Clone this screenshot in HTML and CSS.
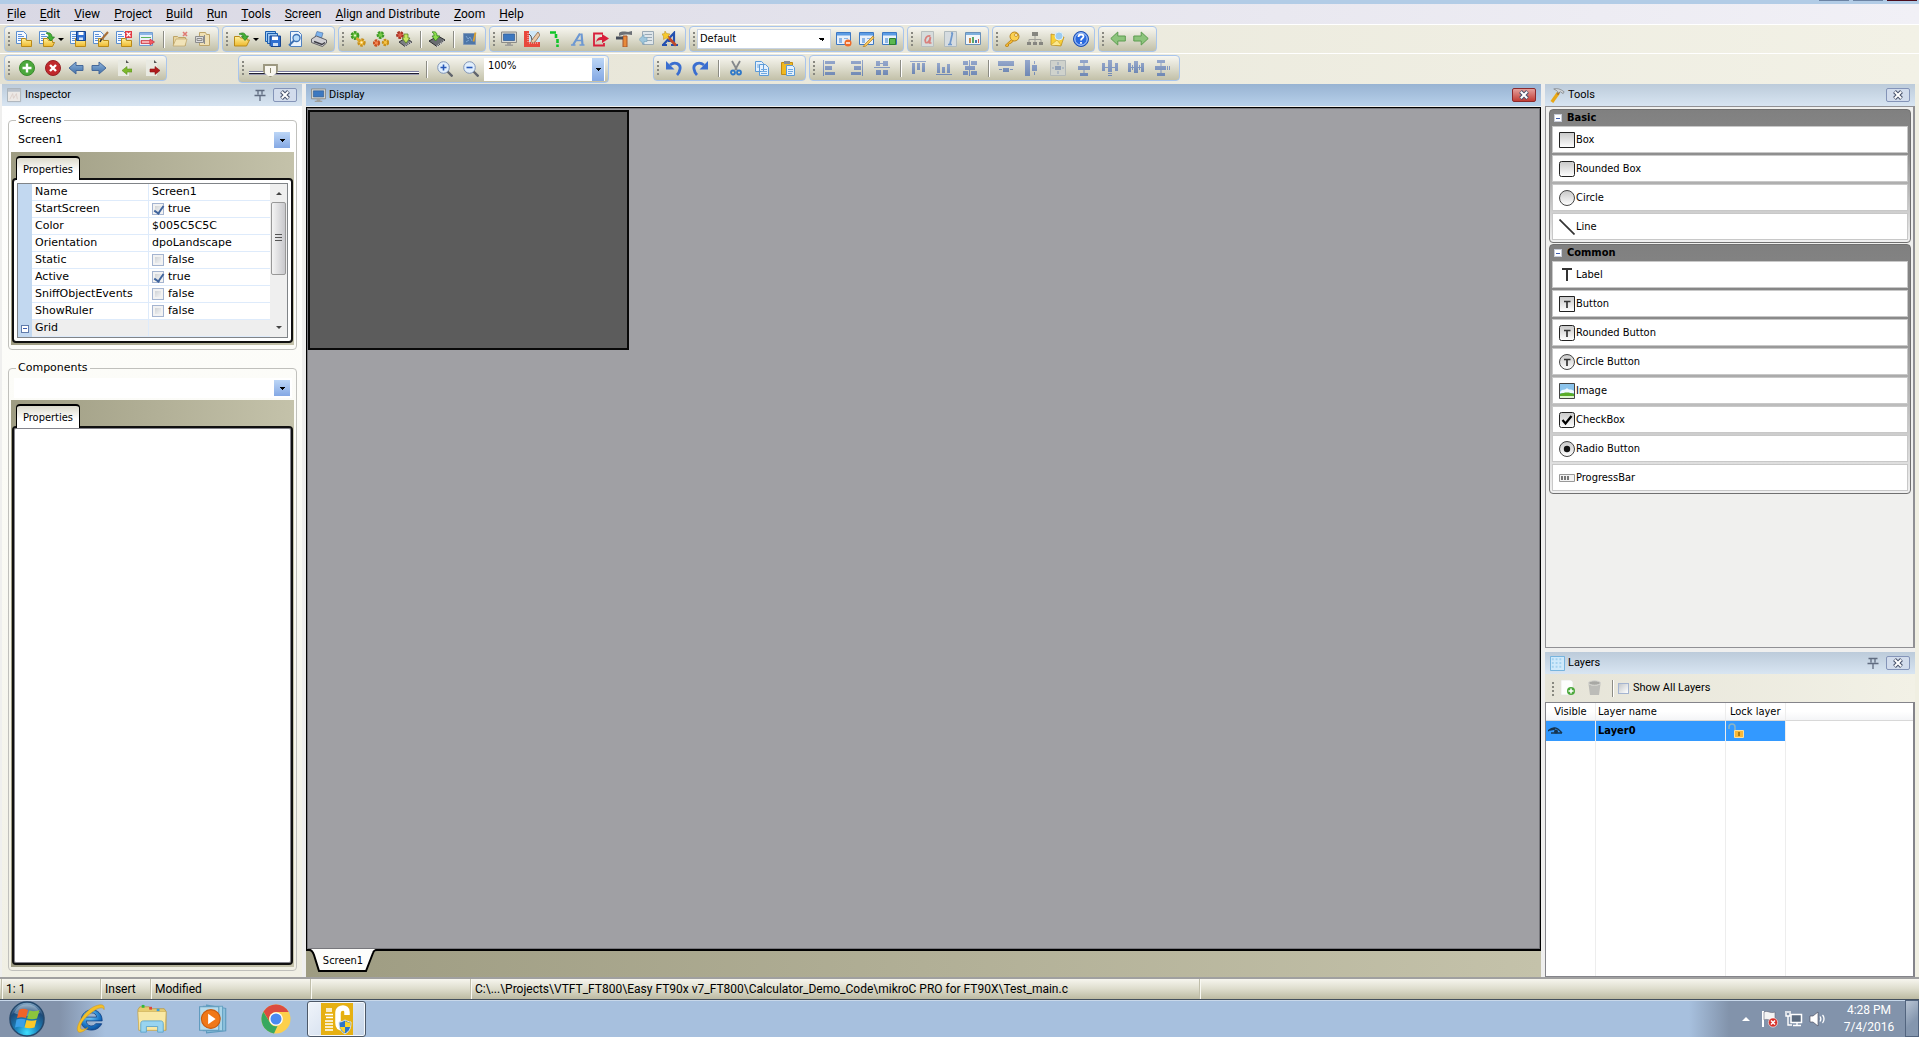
FILE: index.html
```html
<!DOCTYPE html>
<html lang="en">
<head>
<meta charset="utf-8">
<title>Visual TFT</title>
<link rel="stylesheet" href="styles.css">
</head>
<body>
<svg class="sprite" aria-hidden="true">
  <defs>
    <linearGradient id="g-folder" x1="0" y1="0" x2="0" y2="1"><stop offset="0" stop-color="#fff3a0"/><stop offset="1" stop-color="#eeb82c"/></linearGradient>
    <linearGradient id="g-arrow" x1="0" y1="0" x2="0" y2="1"><stop offset="0" stop-color="#8fb4dc"/><stop offset="1" stop-color="#3f6fa8"/></linearGradient>
    <linearGradient id="g-gray" x1="0" y1="0" x2="0" y2="1"><stop offset="0" stop-color="#c8c8c8"/><stop offset="1" stop-color="#ffffff"/></linearGradient>
    <linearGradient id="g-slate" x1="0" y1="0" x2="0" y2="1"><stop offset="0" stop-color="#96a8cc"/><stop offset="1" stop-color="#6f88b4"/></linearGradient>
    <radialGradient id="g-orb" cx=".5" cy=".9" r=".9"><stop offset="0" stop-color="#3fe0ff"/><stop offset=".35" stop-color="#1c86c0"/><stop offset=".75" stop-color="#1d4a78"/><stop offset="1" stop-color="#8fb4d0"/></radialGradient>
    <radialGradient id="g-ie" cx=".4" cy=".3" r=".8"><stop offset="0" stop-color="#7fd4ff"/><stop offset=".6" stop-color="#1c78c8"/><stop offset="1" stop-color="#0a3e86"/></radialGradient>
  </defs>
  <symbol id="i-doc" viewBox="0 0 16 16"><path d="M.5.5h7l3 3v9H.5z" fill="#f4f9ff" stroke="#5a8fd0"/><path d="M2 3.500h4M2 5.500h6M2 7.500h4M2 9.500h3" stroke="#5b8fd8"/></symbol>
  <symbol id="i-folder" viewBox="0 0 16 16"><path d="M5.500 15.500v-8h4l1 2h5v6z" fill="url(#g-folder)" stroke="#b98a18"/></symbol>
  <symbol id="i-new" viewBox="0 0 16 16"><use href="#i-doc"/><use href="#i-folder"/></symbol>
  <symbol id="i-open" viewBox="0 0 16 16"><use href="#i-doc"/><path d="M4.500 15.500v-8h4l1 2h4v2h2l-2 4z" fill="url(#g-folder)" stroke="#b98a18"/><path d="M7 2c4-1 6 1 6 4h2.500L12 10 8 6h2c0-2-1-3-3-4z" fill="#45b035" stroke="#1f7a1c" stroke-width=".7"/></symbol>
  <symbol id="i-save" viewBox="0 0 16 16"><use href="#i-doc"/><use href="#i-folder"/><path d="M6.500.5h9v9h-9z" fill="#2f6fd0" stroke="#17458e"/><path d="M8.500 1h5v3h-5z" fill="#fff"/><path d="M9 6.500h4V9H9z" fill="#cfe0f6"/></symbol>
  <symbol id="i-edit" viewBox="0 0 16 16"><use href="#i-doc"/><use href="#i-folder"/><path d="M15 1 8 9" stroke="#a8713a" stroke-width="2"/><path d="M8.500 8 7 11" stroke="#333" stroke-width="1.500"/></symbol>
  <symbol id="i-close-prj" viewBox="0 0 16 16"><use href="#i-doc"/><use href="#i-folder"/><path d="M9 0h7v7H9z" fill="#e23a44"/><path d="m10.500 1.500 4 4m0-4-4 4" stroke="#fff" stroke-width="1.300"/></symbol>
  <symbol id="i-exit" viewBox="0 0 16 16"><path d="M.5 1.500h13v13H.5z" fill="#e8f1fb" stroke="#6f9bd0"/><path d="M1 2h12v2H1z" fill="#8db6e6"/><path d="M2 6.500h10" stroke="#5bb35b"/><path d="M2 9.500h9V8l4.500 3L11 14v-1.500H2z" fill="#f25a62" stroke="#c0202c" stroke-width=".6"/><path d="M3 11h7" stroke="#fff"/></symbol>
  <symbol id="i-folder-x" viewBox="0 0 16 16"><path d="M1.500 14.500v-9h4l1 1h7v8z" fill="#e9d6a0" stroke="#bda468"/><path d="M4 8h11l-2 7H1z" fill="#f1e3b8" stroke="#bda468" stroke-width=".7"/><path d="m11 1 4 4m0-4-4 4" stroke="#e07a74" stroke-width="1.600"/></symbol>
  <symbol id="i-folder-g" viewBox="0 0 16 16"><path d="M4.500 1.500h6l1 2h3v11h-10z" fill="#efe0b4" stroke="#bda468"/><path d="M.5 5.500h8v6h-8z" fill="#ddd" stroke="#8c8c8c"/><path d="M2 7.500h5v2H2zM9.500 4v9" fill="none" stroke="#8c8c8c"/></symbol>
  <symbol id="i-open2" viewBox="0 0 16 16"><path d="M.5 15V5.500h5l1 1.500H13v2h2.500l-3 6z" fill="url(#g-folder)" stroke="#b98a18"/><path d="M5 3c4-2 6-1 7 2h2.500L11 9.500 7.500 5.500h2C8.800 4 7.500 3.500 5 3z" fill="#45b035" stroke="#1f7a1c" stroke-width=".7"/></symbol>
  <symbol id="i-saveall" viewBox="0 0 16 16"><path d="M.5.500h10v10H.5z" fill="#9cc8f4" stroke="#1b5faf"/><path d="M2.500 2.500h10v10h-10z" fill="#9cc8f4" stroke="#1b5faf"/><path d="M5 5h10.500v10.500H6L5 14.500z" fill="#2f6fd0" stroke="#17458e"/><path d="M7 5.500h6V9H7z" fill="#fff"/><path d="M8 12h5v3H8z" fill="#cfe0f6"/></symbol>
  <symbol id="i-preview" viewBox="0 0 16 16"><path d="M2.500.5h8l3 3v12h-11z" fill="#eaf3fd" stroke="#4f80c0"/><circle cx="8.500" cy="7" r="3.500" fill="#b9dcfa" stroke="#3b70b4" stroke-width="1.300"/><path d="m6 9.500-5 5" stroke="#3b70b4" stroke-width="2"/></symbol>
  <symbol id="i-print" viewBox="0 0 16 16"><path d="m4 6 2-5.500L12 2l-1.500 5z" fill="#7db4ee" stroke="#5076a8" stroke-width=".7"/><path d="m.5 8 5-3 10 4v3l-4 3.500-11-4z" fill="#cfcfd3" stroke="#55555c" stroke-width=".9"/><path d="m3 10.500 8 3 3-2" stroke="#3c3c44" stroke-width="1.500" fill="none"/></symbol>
  <symbol id="i-gears" viewBox="0 0 16 16"><circle cx="5" cy="4.500" r="3.200" fill="#78cc48" stroke="#3f9a28" stroke-width="2.400" stroke-dasharray="2.500 .9"/><circle cx="5" cy="4.500" r="1" fill="#e8f8d8"/><circle cx="11.500" cy="11.500" r="3" fill="#f8c444" stroke="#c8901c" stroke-width="2.400" stroke-dasharray="2.500 .9"/><circle cx="11.500" cy="11.500" r="1" fill="#fff4cc"/><path d="m6.500 7 3 3" stroke="#d8a82c" stroke-width="2.500"/></symbol>
  <symbol id="i-gears3" viewBox="0 0 16 16"><circle cx="7.500" cy="4" r="2.800" fill="#78cc48" stroke="#3f9a28" stroke-width="2.200" stroke-dasharray="2.500 .9"/><circle cx="3.500" cy="12" r="2.600" fill="#f58450" stroke="#c85020" stroke-width="2.200" stroke-dasharray="2.500 .9"/><circle cx="12.500" cy="11.500" r="2.600" fill="#f8c444" stroke="#c8901c" stroke-width="2.200" stroke-dasharray="2.500 .9"/></symbol>
  <symbol id="i-chip" viewBox="0 0 16 16"><path d="m0 10 9-5 7 4-8 6.500z" fill="#6a6d72" stroke="#2c2d31"/><path d="m8 15.500 8-6" stroke="#d8d8d8" stroke-width="2" stroke-dasharray="1 1"/><path d="M3 1c4-1 5 1 5 4h3l-4.500 5L3 5h2c0-2-.500-3-2-4z" fill="#8cdc4c" stroke="#2b7a1a" stroke-width=".7"/></symbol>
  <symbol id="i-gearchip" viewBox="0 0 16 16"><circle cx="4" cy="4" r="2.800" fill="#e0604c" stroke="#a83424" stroke-width="2.200" stroke-dasharray="2.500 .9"/><path d="m3 11 7-4 6 4-7 4.500z" fill="#7c7f84" stroke="#38393d"/><path d="m9 15.500 7-4.500" stroke="#d8d8d8" stroke-width="1.600" stroke-dasharray="1 1"/><path d="M8 3h4v4h2l-4 5-4-5h2z" fill="#c8e860" stroke="#4b7a1a" stroke-width=".7"/></symbol>
  <symbol id="i-board" viewBox="0 0 16 16"><path d="M1.500 2.500h12v11h-12z" fill="#4d76a8" stroke="#7f98b8"/><path d="m4 5 2 3 2-2 2 4M4 11l3-2" stroke="#7ca4d0" fill="none"/><path d="m13.500 1.500-2 9" stroke="#d9a032" stroke-width="1.800"/></symbol>
  <symbol id="i-monitor" viewBox="0 0 16 16"><path d="M.5 1h15v10.500H.5z" fill="#d9d9d4" stroke="#8b8b86"/><path d="M2.500 3h11v6.500h-11z" fill="#3c78c0" stroke="#2c5890" stroke-width=".7"/><path d="M6 12h4v1.500H6zM4 13.500h8V15H4z" fill="#a0a09c"/></symbol>
  <symbol id="i-ruler" viewBox="0 0 16 16"><path d="M4 0h12v12H4z" fill="#cfe8f8"/><path d="M0 0h5v11h11v5H0z" fill="#e8483c"/><path d="m14 1-7 9 1 2 3-1 5-7z" fill="#e8c8a8" stroke="#8a6848" stroke-width=".8"/><path d="m5 3 2 2 1 4" fill="none" stroke="#555"/><path d="M4 2v9M5 12h10" stroke="#fcd0cc" stroke-dasharray="1 1"/></symbol>
  <symbol id="i-question" viewBox="0 0 16 16"><path d="M3 1.500h6M9 3v4M10.500 8v4M10.500 13.500V16" stroke="#10c428" stroke-width="2.600" fill="none"/></symbol>
  <symbol id="i-a" viewBox="0 0 16 16"><path d="M3 14 10 2.500M11.500 2.500l1 11.500" stroke="#6d98d2" stroke-width="2.200" fill="none"/><path d="M5 9.500h7M1 14h4.500M9.500 14h5" stroke="#6d98d2" stroke-width="1.600"/></symbol>
  <symbol id="i-export" viewBox="0 0 16 16"><path d="M11 12v2.500H1v-12h9" fill="none" stroke="#d81e3a" stroke-width="1.800"/><path d="M3 11c1-4 3-5 6-5V3l7 4.500L9 12V9c-2 0-4 0-6 2z" fill="#d81e3a"/></symbol>
  <symbol id="i-hammer" viewBox="0 0 16 16"><path d="M3 2c2-2 7-1.500 9-1l4-1v4l-4-.5c-3 0-6 0-9 1.500z" fill="#6c7076"/><path d="M7 5h4v11H7z" fill="#e88a3a" stroke="#a8562a"/><path d="M0 5.500h7v3H0z" fill="#444b58"/></symbol>
  <symbol id="i-form-back" viewBox="0 0 16 16"><path d="M3.500.5h11v13h-11z" fill="#dfe6ea" stroke="#9aa9b4"/><path d="M6 3.500h7M8 6.500h5M8 9.500h5" stroke="#9aa9b4"/><path d="m0 8.500 5-5v3h3v4H5v3z" fill="#9fc6dc" stroke="#6f9db8" stroke-width=".6"/></symbol>
  <symbol id="i-wizard" viewBox="0 0 16 16"><path d="M1 14 12 2v12M6 10h6M0 14h5M9 14h7" stroke="#2350b0" stroke-width="2.200" fill="none"/><path d="m5 5 9 9.500" stroke="#c0482a" stroke-width="2.600"/><path d="m3 0 1.500 2.500L8 3 6 5.500 7 8 4 7 1.500 8.500V5.500L0 3l2.500-.5z" fill="#f6c82c" stroke="#b98a18" stroke-width=".5"/></symbol>
  <symbol id="i-win" viewBox="0 0 16 16"><path d="M.5 1.500h14v12H.5z" fill="#e8f0fa" stroke="#3c78c4"/><path d="M1 2h13v2.500H1z" fill="#5c9ce4"/><path d="M3 7h3v5H3zM8 7h4v1H8z" fill="#8db6e6"/></symbol>
  <symbol id="i-win-del" viewBox="0 0 16 16"><use href="#i-win"/><circle cx="12" cy="12" r="3.500" fill="#ee6a28"/><path d="M10 12h4" stroke="#fff" stroke-width="1.400"/></symbol>
  <symbol id="i-win-edit" viewBox="0 0 16 16"><use href="#i-win"/><path d="m14 5-8 8-2 3 3-1 8-8z" fill="#f6c860" stroke="#b9842c" stroke-width=".8"/></symbol>
  <symbol id="i-win-green" viewBox="0 0 16 16"><use href="#i-win"/><path d="M7.500 7.500h6v6h-6z" fill="#5cb850" stroke="#2f8030"/></symbol>
  <symbol id="i-fonta" viewBox="0 0 16 16"><path d="M2.500.5h12v15h-12z" fill="#d6dcdc" stroke="#b8bebe"/><path d="M11.500 5c-4-1-6 3-5 6 1 2 4 0 5-5l-1 6h2" fill="none" stroke="#d8807c" stroke-width="1.700"/></symbol>
  <symbol id="i-fontl" viewBox="0 0 16 16"><path d="M2.500.5h12v15h-12z" fill="#d6dce0" stroke="#b0babe"/><path d="M10.500 2 8 13M9 2h2M6 13.500h4" fill="none" stroke="#6f98cc" stroke-width="1.700"/></symbol>
  <symbol id="i-chart" viewBox="0 0 16 16"><path d="M.5 1.500h15v12H.5z" fill="#f2f5f8" stroke="#6a90b8"/><path d="M1 2h14v2H1z" fill="#7fb0dc"/><path d="M4 7h2v5H4z" fill="#c88848"/><path d="M7 6h2v6H7z" fill="#58a868"/><path d="M10 9h2v3h-2z" fill="#4a78b0"/><path d="M13 8h1v4h-1z" fill="#d05850"/></symbol>
  <symbol id="i-key" viewBox="0 0 16 16"><path d="m7.500 8.500-6.500 6 2 1.500 1.500-1v-2l2-.5 3-2.500" fill="#f4b830" stroke="#b47c14" stroke-width=".8"/><circle cx="10.500" cy="5.500" r="4.500" fill="#fbd050" stroke="#b47c14" stroke-width=".9"/><circle cx="12" cy="4" r="1.500" fill="#fff6d8" stroke="#b47c14" stroke-width=".7"/></symbol>
  <symbol id="i-tree" viewBox="0 0 16 16"><path d="M5 1h6v4H5zM0 11h4v3H0zM6 11h4v3H6zM12 11h4v3h-4z" fill="#868680"/><path d="M8 5v6M2 11V8.500h12V11" fill="none" stroke="#a0a09a"/></symbol>
  <symbol id="i-mail" viewBox="0 0 16 16"><path d="M1 3 14 6l-3 9-10-1z" fill="#f8d038" stroke="#b98a18" stroke-width=".7"/><circle cx="9" cy="5" r="4" fill="#9cccf0" stroke="#dfeef8"/><path d="M1 14 7 9l4 5" fill="#fbe88c" stroke="#c89c28" stroke-width=".6"/></symbol>
  <symbol id="i-help" viewBox="0 0 16 16"><circle cx="8" cy="8" r="7.500" fill="#2a6ae0" stroke="#2050b0"/><circle cx="8" cy="8" r="6.200" fill="none" stroke="#bfd6fa"/><path d="M5.500 6c0-3.500 5-3 5-.5 0 2-2.500 1.500-2.500 4M8 11v1.800" fill="none" stroke="#fff" stroke-width="1.800"/></symbol>
  <symbol id="i-gleft" viewBox="0 0 16 16"><path d="m.8 7.500 7-6.500v4h7.500v5H7.800v4z" fill="#8cc47c" stroke="#5c9c50"/></symbol>
  <symbol id="i-gright" viewBox="0 0 16 16"><path d="M15.200 7.500 8.200 1v4H.8v5h7.400v4z" fill="#8cc47c" stroke="#5c9c50"/></symbol>
  <symbol id="i-add" viewBox="0 0 16 16"><circle cx="8" cy="8" r="7.500" fill="#4ca83c" stroke="#3a8a2c"/><path d="M8 3.500v9M3.500 8h9" stroke="#fff" stroke-width="2.400"/></symbol>
  <symbol id="i-remove" viewBox="0 0 16 16"><circle cx="8" cy="8" r="7.500" fill="#c0282c" stroke="#962024"/><path d="m5 5 6 6m0-6-6 6" stroke="#fff" stroke-width="2.400"/></symbol>
  <symbol id="i-bleft" viewBox="0 0 16 16"><path d="m1 8 7-6v3.500h7v5H8V14z" fill="url(#g-arrow)" stroke="#46699a"/></symbol>
  <symbol id="i-bright" viewBox="0 0 16 16"><path d="M15 8 8 2v3.500H1v5h7V14z" fill="url(#g-arrow)" stroke="#46699a"/></symbol>
  <symbol id="i-import-g" viewBox="0 0 16 16"><path d="M2 0h8l3 3v13H2z" fill="#e9eae2"/><path d="M10 0v3h3z" fill="#555"/><path d="m6 10.500 5-4v2.500h5v3h-5v2.500z" fill="#7cb82c" stroke="#5a9020" stroke-width=".6"/></symbol>
  <symbol id="i-export-r" viewBox="0 0 16 16"><path d="M2 0h8l3 3v13H2z" fill="#e9eae2"/><path d="M10 0v3h3z" fill="#555"/><path d="m16 10.500-5-4v2.500H6v3h5v2.500z" fill="#b01c1c" stroke="#8a1010" stroke-width=".6"/></symbol>
  <symbol id="i-zoomin" viewBox="0 0 16 16"><path d="m10.500 10.500 5 5" stroke="#60646c" stroke-width="2.400"/><circle cx="6.500" cy="6.500" r="5.800" fill="#e2effc" stroke="#8095b8"/><path d="M6.500 3.500v6M3.500 6.500h6" stroke="#2858b8" stroke-width="1.600"/></symbol>
  <symbol id="i-zoomout" viewBox="0 0 16 16"><path d="m10.500 10.500 5 5" stroke="#60646c" stroke-width="2.400"/><circle cx="6.500" cy="6.500" r="5.800" fill="#e2effc" stroke="#8095b8"/><path d="M3.500 6.500h6" stroke="#2858b8" stroke-width="1.600"/></symbol>
  <symbol id="i-undo" viewBox="0 0 16 16"><path d="M4 5c5-4 11-1 10 4-.3 2-1 4-3 6" fill="none" stroke="#3a6ed0" stroke-width="2.800"/><path d="M0 1v8.500h8.500z" fill="#3a6ed0"/></symbol>
  <symbol id="i-redo" viewBox="0 0 16 16"><path d="M12 5C7 1 1 4 2 9c.3 2 1 4 3 6" fill="none" stroke="#3a6ed0" stroke-width="2.800"/><path d="M16 1v8.500H7.500z" fill="#3a6ed0"/></symbol>
  <symbol id="i-cut" viewBox="0 0 16 16"><path d="m4 1 5 9M12 1l-5 9" stroke="#84888c" stroke-width="1.800"/><circle cx="5" cy="12.500" r="2" fill="none" stroke="#2f78c8" stroke-width="1.800"/><circle cx="11" cy="12.500" r="2" fill="none" stroke="#2f78c8" stroke-width="1.800"/></symbol>
  <symbol id="i-copy" viewBox="0 0 16 16"><path d="M1.500 1.500h6l2 2v8h-8zM5.500 4.500h6l3 3v8h-9z" fill="#e4f0fc" stroke="#5b9ad8"/><path d="M7 9.500h6M7 11.500h6M7 13.500h6M3 5h2M3 7h2" stroke="#6fa8e0"/></symbol>
  <symbol id="i-paste" viewBox="0 0 16 16"><path d="M1.500 2.500h11v12h-11z" fill="#f0b820" stroke="#c48c10"/><path d="M4 1h6v3H4z" fill="#8a8e94"/><path d="M6.500 5.500h6l2 2v8h-8z" fill="#e4f0fc" stroke="#5b9ad8"/><path d="M8 9.500h5M8 11.500h5M8 13.500h4" stroke="#6fa8e0"/></symbol>
  <symbol id="i-al" viewBox="0 0 16 16"><path d="M1 0h1v16H1zM3 1h10v3H3zM3 6h7v4H3zM3 12h10v3H3z" fill="url(#g-slate)"/></symbol>
  <symbol id="i-ar" viewBox="0 0 16 16"><path d="M14 0h1v16h-1zM3 1h10v3H3zM6 6h7v4H6zM3 12h10v3H3z" fill="url(#g-slate)"/></symbol>
  <symbol id="i-ac" viewBox="0 0 16 16"><path d="M0 7h16v1H0zM2 1h4v5H2zM9 1h5v5H9zM2 10h5v5H2zM9 10h5v5H9zM6 3h3v1H6z" fill="url(#g-slate)"/></symbol>
  <symbol id="i-at" viewBox="0 0 16 16"><path d="M0 1h16v1H0zM2 3h3v11H2zM7 3h3v7H7zM12 3h3v9h-3z" fill="url(#g-slate)"/></symbol>
  <symbol id="i-ab" viewBox="0 0 16 16"><path d="M0 14h16v1H0zM1 3h3v10H1zM6 7h3v6H6zM11 4h3v9h-3z" fill="url(#g-slate)"/></symbol>
  <symbol id="i-am" viewBox="0 0 16 16"><path d="M7 0h1v16H7zM1 1h5v4H1zM9 1h6v4H9zM3 6h10v4H3zM1 11h5v4H1zM9 11h6v4H9z" fill="url(#g-slate)"/></symbol>
  <symbol id="i-ct" viewBox="0 0 16 16"><path d="M0 1h16v5H0zM5 8h6v4H5zM1 9h3v1H1zM12 9h3v1h-3z" fill="url(#g-slate)"/></symbol>
  <symbol id="i-cl" viewBox="0 0 16 16"><path d="M1 0h5v16H1zM8 5h5v6H8zM10 1h1v3h-1zM10 12h1v3h-1z" fill="url(#g-slate)"/></symbol>
  <symbol id="i-cc" viewBox="0 0 16 16"><path d="M.5.5h15v15H.5z" fill="#cfd2cc" stroke="#b2b8b8"/><path d="M5 6h6v4H5zM7.500 2h1v3h-1zM7.500 11h1v3h-1zM2 7.500h2v1H2zM12 7.500h2v1h-2z" fill="#8fa0b8"/></symbol>
  <symbol id="i-dv" viewBox="0 0 16 16"><path d="M4 0h8v3H4zM2 6h12v4H2zM4 13h8v3H4zM7.500 3h1v10h-1z" fill="url(#g-slate)"/></symbol>
  <symbol id="i-dv2" viewBox="0 0 16 16"><path d="M3 0h8v3H3zM1 6h11v4H1zM3 13h8v3H3zM6.500 3h1v10h-1zM13 6h1v4h-1zM15 6h1v4h-1z" fill="url(#g-slate)"/></symbol>
  <symbol id="i-dh" viewBox="0 0 16 16"><path d="M0 3h3v8H0zM6 0h4v12H6zM13 3h3v8h-3zM3 7h10v1H3zM6 13h4v1H6zM6 15h4v1H6z" fill="url(#g-slate)"/></symbol>
  <symbol id="i-dh2" viewBox="0 0 16 16"><path d="M0 3h3v9H0zM6 1h4v12H6zM13 3h3v9h-3zM3 7h10v1H3zM4 5h1v5H4zM11 5h1v5h-1z" fill="url(#g-slate)"/></symbol>
  <symbol id="i-pin" viewBox="0 0 12 12"><path d="M1.500 1.500h9M4 2v3.500M8 2v3.500M.5 6.500h11M6 7v5" fill="none" stroke="#606c80" stroke-width="1.300"/></symbol>
  <symbol id="i-x" viewBox="0 0 12 10"><path d="m2.500 1.500 7 7m0-7-7 7" stroke="#46506a" stroke-width="4"/><path d="m2.800 1.800 6.400 6.400m0-6.400L2.800 8.200" stroke="#fff" stroke-width="2"/></symbol>
  <symbol id="i-inspect" viewBox="0 0 16 16"><path d="M.5.5h14v14H.5z" fill="#ece9e6" stroke="#a8b0b8"/><path d="M1 1h13v3H1z" fill="#b8c0ca"/><path d="m3 12 3-6 1 5 3-5 1 6" fill="none" stroke="#dccfca"/></symbol>
  <symbol id="i-tools" viewBox="0 0 16 16"><path d="m9 5-7 10" stroke="#e8a818" stroke-width="3.600"/><path d="m10 4-2 3" stroke="#b8680c" stroke-width="2"/><path d="M4 1c4-1 7 0 11 3l-1 2-3-2-3 2C9 4 8 3 4 1z" fill="#d4d8dc" stroke="#74787c" stroke-width=".7"/></symbol>
  <symbol id="i-layers" viewBox="0 0 16 16"><path d="M.5.5h15v15H.5z" fill="#cfe9fb" stroke="#6fb0dc"/><path d="M2 3.500h12M2 7.500h12M2 11.500h12" stroke="#a4d2f0" stroke-width="2" stroke-dasharray="2 2"/></symbol>
  <symbol id="t-box" viewBox="0 0 16 16"><path d="M.5.5h15v15H.5z" fill="url(#g-gray)" stroke="#222"/></symbol>
  <symbol id="t-rbox" viewBox="0 0 16 16"><rect x=".5" y=".5" width="15" height="15" rx="2" fill="url(#g-gray)" stroke="#222"/></symbol>
  <symbol id="t-circle" viewBox="0 0 16 16"><circle cx="8" cy="8" r="7.500" fill="url(#g-gray)" stroke="#444"/></symbol>
  <symbol id="t-line" viewBox="0 0 16 16"><path d="m.5.500 15 15" stroke="#333" stroke-width="1.700"/></symbol>
  <symbol id="t-label" viewBox="0 0 16 16"><path d="M3 2h10M8 2v12" stroke="#333" stroke-width="2"/></symbol>
  <symbol id="t-t" viewBox="0 0 16 16"><path d="M5 5.500h6.500M8 5.500V12" stroke="#333" stroke-width="1.700"/></symbol>
  <symbol id="t-button" viewBox="0 0 16 16"><use href="#t-box"/><use href="#t-t"/></symbol>
  <symbol id="t-rbutton" viewBox="0 0 16 16"><use href="#t-rbox"/><use href="#t-t"/></symbol>
  <symbol id="t-cbutton" viewBox="0 0 16 16"><use href="#t-circle"/><use href="#t-t"/></symbol>
  <symbol id="t-image" viewBox="0 0 16 16"><path d="M.5.5h15v15H.5z" fill="#8cc4ec" stroke="#444"/><path d="M1 9c3-4 5-1 7-4 2 3 4 0 7 3v2H1z" fill="#eef8ff"/><path d="M1 11c5-2 9-2 14 0v2H1z" fill="#58ac28"/><path d="M1 13h14v2H1z" fill="#dff4d0"/></symbol>
  <symbol id="t-check" viewBox="0 0 16 16"><use href="#t-rbox"/><path d="m3.500 8 3 3.500 6-7.500" fill="none" stroke="#000" stroke-width="2.200"/></symbol>
  <symbol id="t-radio" viewBox="0 0 16 16"><use href="#t-circle"/><circle cx="8" cy="8" r="3.200" fill="#111"/></symbol>
  <symbol id="t-progress" viewBox="0 0 16 16"><path d="M.5 4.500h15v7H.5z" fill="#f4f4f4" stroke="#999"/><path d="M2 6h2v4H2zM5 6h2v4H5zM8 6h2v4H8z" fill="#777"/></symbol>
  <symbol id="i-layer-add" viewBox="0 0 16 16"><path d="M1 0h10l2 2v13H1z" fill="#fdfdfd" stroke="#e0e0dc" stroke-width=".6"/><circle cx="11" cy="11" r="4" fill="#4ca83c"/><path d="M11 8.500v5M8.500 11h5" stroke="#fff" stroke-width="1.500"/></symbol>
  <symbol id="i-trash" viewBox="0 0 16 16"><path d="m2.500 4 1.500 11h9l1.500-11c-3 2-9 2-12 0z" fill="#bcbcb8"/><ellipse cx="8.500" cy="3" rx="6" ry="2.200" fill="#a8a8a4" stroke="#d4d4d0"/></symbol>
  <symbol id="i-eye" viewBox="0 0 16 10"><path d="M0 5c5-5 9-4 14 2M3 7h11M2 4l5-1" fill="none" stroke="#16344e" stroke-width="1.300"/><circle cx="8" cy="5.500" r="2" fill="#16344e"/></symbol>
  <symbol id="i-lock" viewBox="0 0 16 16"><path d="M1 6V4c0-4 6-4 6 0v3" fill="none" stroke="#8cb4c4" stroke-width="1.500"/><path d="M6.500 7.500h9v7h-9z" fill="#f8b838" stroke="#fbe0a0"/><path d="M10 9h2v4h-2z" fill="#b07c10"/></symbol>
  <symbol id="k-start" viewBox="0 0 36 36"><circle cx="18" cy="18" r="17" fill="url(#g-orb)" stroke="#24486c" stroke-width="1.500"/><path d="M5 12a14 14 0 0 1 26 0c-8 4-18 4-26 0z" fill="#fff" opacity=".3"/><path d="M10 9c3-2 6-1 9 0l-2 8c-3-1-6-1-9 0z" fill="#f06428"/><path d="M20.500 9.500c3 1 7 1 10-.500l-2.500 8.500c-3 1-7 1-10 0z" fill="#8cc63c"/><path d="M7.500 18.500c3-1 6-1 9 0l-2 8c-3-1-6-1-8.500 0z" fill="#3ca0e8"/><path d="M17.500 19c3 1 7 1 10 0l-2 7.500c-3 1-7 1-10 0z" fill="#fcc828"/></symbol>
  <symbol id="k-ie" viewBox="0 0 32 32"><path d="M29 18H12c0 6 8 7 10 3h6.500c-5 11-23 8-22-4C7.500 3 29 2 29 18zM12 14h11c0-6-10-6-11 0z" fill="url(#g-ie)" stroke="#0c3c80" stroke-width=".8"/><path d="M4 30C-2 27 10 6 22 2c6-2 10-2 9 4-1-3-5-2-9 0C12 12 4 22 6 26c1 2 4 1 8-1-4 4-8 6-10 5z" fill="#f4c028" stroke="#c89018" stroke-width=".5"/></symbol>
  <symbol id="k-explorer" viewBox="0 0 32 32"><path d="M1 6 3 3h10l1 2h15l2 3v20H2z" fill="#e6cc70" stroke="#b89840" stroke-width=".8"/><path d="M5 1h3v3H5z" fill="#30b838"/><path d="M13 3h3v3h-3z" fill="#e04838"/><path d="M21 5h3v3h-3z" fill="#38a0e0"/><path d="M1 8h30l-1 20H2z" fill="#f9e8a4" stroke="#c8a850" stroke-width=".6"/><path d="M4 30v-9c0-2 1-3 3-3h18c2 0 3 1 3 3v9h-6v-6H10v6z" fill="#98d4f0" stroke="#58a0c8" stroke-width=".9"/></symbol>
  <symbol id="k-wmp" viewBox="0 0 30 28"><path d="m8 1 18 3v21l-18 2z" fill="#8cc0dc" stroke="#5c98bc"/><path d="M5 2h18v23H5z" fill="#a8d4e8" stroke="#68a4c4"/><path d="M1.500 2.500h18v22h-18z" fill="#b8dcec" stroke="#5c98bc"/><circle cx="12" cy="14" r="8.800" fill="#f07818" stroke="#c85c10"/><path d="m9.500 9 7 5-7 5z" fill="#fff"/></symbol>
  <symbol id="k-chrome" viewBox="0 0 30 30"><circle cx="15" cy="15" r="14.500" fill="#fcd04c"/><path d="M2.500 7.500A14.500 14.500 0 0 1 27.600 8H15a7 7 0 0 0-6.200 10.300z" fill="#dc4c40"/><path d="M2.400 7.700 8.800 18.300A7 7 0 0 0 16.500 22L13 29.400A14.500 14.500 0 0 1 2.400 7.700z" fill="#38a860"/><circle cx="15" cy="15" r="6.800" fill="#fff"/><circle cx="15" cy="15" r="5.500" fill="#4a8af0"/></symbol>
  <symbol id="k-mikro" viewBox="0 0 32 32"><path d="M0 0h32v32H0z" fill="#e6b012"/><path d="M26 12V9c0-3-2-4-4-4s-5 1-5 5v10c0 4 2 5 5 5" fill="none" stroke="#fff" stroke-width="5.500"/><path d="M4 27h8M4 24h8M4 21h8M4 18h8M5 14.500h7M4 11.500h8M5 8h6M5 6h6" stroke="#fff" stroke-width="1.700"/><path d="M18 19c3 0 4-1 6-2 2 1 4 2 6 2 0 6-1 9-6 12-5-3-6-6-6-12z" fill="#2c74c8" stroke="#dfe8f0"/><path d="M24 18v6h5c0-2 .500-3 .500-4.500-2 0-4-.500-5.500-1.500zM24 24v6c-3-2-4.500-4-5-6z" fill="#fcd428"/></symbol>
  <symbol id="y-flag" viewBox="0 0 18 18"><path d="M2 1v16" stroke="#fff" stroke-width="2"/><path d="M3 2c4-2 6 2 11 0v8c-5 2-7-2-11 0z" fill="#f4f4f4" stroke="#667" stroke-width=".6"/><circle cx="12" cy="12.500" r="4.600" fill="#d83028" stroke="#fff" stroke-width=".6"/><path d="m10 10.500 4 4m0-4-4 4" stroke="#fff" stroke-width="1.500"/></symbol>
  <symbol id="y-net" viewBox="0 0 18 18"><path d="M6 4.500h10.500v8H6z" fill="#5c6c80" stroke="#fff" stroke-width="1.500"/><path d="M8 15.500h8M12 13v2M3 6v9h4M1 1v5h4V1M3 1v2" fill="none" stroke="#fff" stroke-width="1.400"/></symbol>
  <symbol id="y-vol" viewBox="0 0 18 18"><path d="M1 6h3l5-4v14l-5-4H1z" fill="#fff" stroke="#445" stroke-width=".6"/><path d="M11 6.500c1 1.500 1 3.500 0 5M13.500 5c2 2 2 6 0 8" fill="none" stroke="#fff" stroke-width="1.300"/></symbol>
</svg>

<div class="app">
  <div class="caption-strip"><span class="caption-button"></span><span class="caption-button"></span><span class="caption-button caption-close"></span></div>
  <nav class="menu-bar">
    <a href="#file"><u>F</u>ile</a><a href="#edit"><u>E</u>dit</a><a href="#view"><u>V</u>iew</a><a href="#project"><u>P</u>roject</a><a href="#build"><u>B</u>uild</a><a href="#run"><u>R</u>un</a><a href="#tools"><u>T</u>ools</a><a href="#screen"><u>S</u>creen</a><a href="#align"><u>A</u>lign and Distribute</a><a href="#zoom"><u>Z</u>oom</a><a href="#help"><u>H</u>elp</a>
  </nav>

  <div class="toolbar-row">
    <div class="toolbar" role="toolbar" aria-label="Project">
      <button aria-label="New project"><svg><use href="#i-new"/></svg></button>
      <button class="has-menu" aria-label="Open project"><svg><use href="#i-open"/></svg></button>
      <button aria-label="Save project"><svg><use href="#i-save"/></svg></button>
      <button aria-label="Edit project"><svg><use href="#i-edit"/></svg></button>
      <button aria-label="Close project"><svg><use href="#i-close-prj"/></svg></button>
      <button aria-label="Exit"><svg><use href="#i-exit"/></svg></button>
      <span class="separator"></span>
      <button aria-label="Remove folder"><svg><use href="#i-folder-x"/></svg></button>
      <button aria-label="Rename folder"><svg><use href="#i-folder-g"/></svg></button>
    </div>
    <div class="toolbar" role="toolbar" aria-label="File">
      <button class="has-menu" aria-label="Open file"><svg><use href="#i-open2"/></svg></button>
      <button aria-label="Save all"><svg><use href="#i-saveall"/></svg></button>
      <button aria-label="Print preview"><svg><use href="#i-preview"/></svg></button>
      <button aria-label="Print"><svg><use href="#i-print"/></svg></button>
    </div>
    <div class="toolbar" role="toolbar" aria-label="Build">
      <button aria-label="Build"><svg><use href="#i-gears"/></svg></button>
      <button aria-label="Build all"><svg><use href="#i-gears3"/></svg></button>
      <button aria-label="Build and program"><svg><use href="#i-gearchip"/></svg></button>
      <span class="separator"></span>
      <button aria-label="Program"><svg><use href="#i-chip"/></svg></button>
      <span class="separator"></span>
      <button aria-label="Board"><svg><use href="#i-board"/></svg></button>
    </div>
    <div class="toolbar" role="toolbar" aria-label="Tools">
      <button aria-label="Display"><svg><use href="#i-monitor"/></svg></button>
      <button aria-label="Theme"><svg><use href="#i-ruler"/></svg></button>
      <button aria-label="Snake"><svg><use href="#i-question"/></svg></button>
      <button aria-label="Font"><svg><use href="#i-a"/></svg></button>
      <button aria-label="Export"><svg><use href="#i-export"/></svg></button>
      <button aria-label="Options"><svg><use href="#i-hammer"/></svg></button>
      <button aria-label="Restore"><svg><use href="#i-form-back"/></svg></button>
      <button aria-label="Wizard"><svg><use href="#i-wizard"/></svg></button>
    </div>
    <div class="toolbar toolbar-snug" role="toolbar" aria-label="Scheme">
      <span class="picker picker-scheme"><select aria-label="Scheme"><option>Default</option></select></span>
      <button aria-label="Delete scheme"><svg><use href="#i-win-del"/></svg></button>
      <button aria-label="Edit scheme"><svg><use href="#i-win-edit"/></svg></button>
      <button aria-label="Save scheme"><svg><use href="#i-win-green"/></svg></button>
    </div>
    <div class="toolbar" role="toolbar" aria-label="Fonts">
      <button aria-label="Font style"><svg><use href="#i-fonta"/></svg></button>
      <button aria-label="Font line"><svg><use href="#i-fontl"/></svg></button>
      <button aria-label="Statistics"><svg><use href="#i-chart"/></svg></button>
    </div>
    <div class="toolbar toolbar-snug" role="toolbar" aria-label="Help">
      <button aria-label="License"><svg><use href="#i-key"/></svg></button>
      <button aria-label="Structure"><svg><use href="#i-tree"/></svg></button>
      <button aria-label="Support"><svg><use href="#i-mail"/></svg></button>
      <button aria-label="Help"><svg><use href="#i-help"/></svg></button>
    </div>
    <div class="toolbar" role="toolbar" aria-label="History">
      <button aria-label="Back"><svg><use href="#i-gleft"/></svg></button>
      <button aria-label="Forward"><svg><use href="#i-gright"/></svg></button>
    </div>
  </div>

  <div class="toolbar-row toolbar-row-second">
    <div class="toolbar toolbar-screens" role="toolbar" aria-label="Screens">
      <button class="wide" aria-label="Add screen"><svg><use href="#i-add"/></svg></button>
      <button aria-label="Remove screen"><svg><use href="#i-remove"/></svg></button>
      <button aria-label="Previous screen"><svg><use href="#i-bleft"/></svg></button>
      <button aria-label="Next screen"><svg><use href="#i-bright"/></svg></button>
      <button class="wide" aria-label="Import screen"><svg><use href="#i-import-g"/></svg></button>
      <button class="wide" aria-label="Export screen"><svg><use href="#i-export-r"/></svg></button>
    </div>
    <div class="toolbar toolbar-zoom" role="toolbar" aria-label="Zoom">
      <input class="zoom-slider" type="range" min="0" max="100" value="9" aria-label="Zoom level">
      <span class="separator"></span>
      <button class="wide" aria-label="Zoom in"><svg><use href="#i-zoomin"/></svg></button>
      <button aria-label="Zoom out"><svg><use href="#i-zoomout"/></svg></button>
      <span class="picker picker-zoom"><select aria-label="Zoom"><option>100%</option></select></span>
    </div>
    <div class="toolbar toolbar-edit" role="toolbar" aria-label="Edit">
      <button aria-label="Undo"><svg><use href="#i-undo"/></svg></button>
      <button aria-label="Redo"><svg><use href="#i-redo"/></svg></button>
      <span class="separator"></span>
      <button aria-label="Cut"><svg><use href="#i-cut"/></svg></button>
      <button aria-label="Copy"><svg><use href="#i-copy"/></svg></button>
      <button aria-label="Paste"><svg><use href="#i-paste"/></svg></button>
    </div>
    <div class="toolbar toolbar-align" role="toolbar" aria-label="Align">
      <button aria-label="Align left"><svg><use href="#i-al"/></svg></button>
      <button aria-label="Align right"><svg><use href="#i-ar"/></svg></button>
      <button aria-label="Align centers"><svg><use href="#i-ac"/></svg></button>
      <span class="separator"></span>
      <button aria-label="Align top"><svg><use href="#i-at"/></svg></button>
      <button aria-label="Align bottom"><svg><use href="#i-ab"/></svg></button>
      <button aria-label="Align middles"><svg><use href="#i-am"/></svg></button>
      <span class="separator"></span>
      <button aria-label="Center horizontally"><svg><use href="#i-ct"/></svg></button>
      <button aria-label="Center vertically"><svg><use href="#i-cl"/></svg></button>
      <button aria-label="Center in screen"><svg><use href="#i-cc"/></svg></button>
      <button aria-label="Distribute vertically"><svg><use href="#i-dv"/></svg></button>
      <button aria-label="Distribute horizontally"><svg><use href="#i-dh"/></svg></button>
      <button aria-label="Space horizontally"><svg><use href="#i-dh2"/></svg></button>
      <button aria-label="Space vertically"><svg><use href="#i-dv2"/></svg></button>
    </div>
  </div>

  <main class="workspace">
    <aside class="inspector">
      <header class="dock-title"><svg class="dock-icon"><use href="#i-inspect"/></svg><h2>Inspector</h2><button class="pin" aria-label="Pin"><svg><use href="#i-pin"/></svg></button><button class="close" aria-label="Close"><svg><use href="#i-x"/></svg></button></header>
      <div class="inspector-body">
        <fieldset class="screens-box">
          <legend>Screens</legend>
          <span class="picker picker-wide"><select aria-label="Screen"><option>Screen1</option></select></span>
          <div class="tab-area">
            <button class="tab">Properties</button>
            <div class="tab-page">
              <div class="property-frame">
                <table class="properties">
                  <tr><td class="gutter"></td><th>Name</th><td>Screen1</td></tr>
                  <tr><td class="gutter"></td><th>StartScreen</th><td><label><input type="checkbox" checked>true</label></td></tr>
                  <tr><td class="gutter"></td><th>Color</th><td>$005C5C5C</td></tr>
                  <tr><td class="gutter"></td><th>Orientation</th><td>dpoLandscape</td></tr>
                  <tr><td class="gutter"></td><th>Static</th><td><label><input type="checkbox">false</label></td></tr>
                  <tr><td class="gutter"></td><th>Active</th><td><label><input type="checkbox" checked>true</label></td></tr>
                  <tr><td class="gutter"></td><th>SniffObjectEvents</th><td><label><input type="checkbox">false</label></td></tr>
                  <tr><td class="gutter"></td><th>ShowRuler</th><td><label><input type="checkbox">false</label></td></tr>
                  <tr class="category"><td class="gutter"><span class="fold"></span></td><th>Grid</th><td></td></tr>
                </table>
                <div class="scrollbar"><span class="scroll-up"></span><span class="scroll-thumb"></span><span class="scroll-down"></span></div>
              </div>
            </div>
          </div>
        </fieldset>
        <fieldset class="components-box">
          <legend>Components</legend>
          <span class="picker picker-wide"><select aria-label="Component"><option></option></select></span>
          <div class="tab-area">
            <button class="tab">Properties</button>
            <div class="tab-page tab-page-empty"></div>
          </div>
        </fieldset>
      </div>
    </aside>

    <section class="display">
      <header class="dock-title dock-title-active"><svg class="dock-icon"><use href="#i-monitor"/></svg><h2>Display</h2><button class="close close-active" aria-label="Close"><svg><use href="#i-x"/></svg></button></header>
      <div class="canvas"><div class="device-screen"></div></div>
      <div class="screen-tabs">
        <button class="screen-tab"><svg class="screen-tab-shape" viewBox="0 0 68 24" preserveAspectRatio="none"><path d="M0 0c3 0 4 2 5 5l5 17h47l7-18c1-3 2-4 4-4z" fill="#fdfdfb"/><path d="M0 1c3 0 4 2 5 5l5 16h47l7-18c1-3 2-3 4-3" fill="none" stroke="#000" stroke-width="2"/></svg><span>Screen1</span></button>
      </div>
    </section>

    <aside class="right-dock">
      <section class="tools-panel">
        <header class="dock-title"><svg class="dock-icon"><use href="#i-tools"/></svg><h2>Tools</h2><button class="close" aria-label="Close"><svg><use href="#i-x"/></svg></button></header>
        <div class="tools-body">
          <section class="tool-group">
            <h3><span class="fold"></span>Basic</h3>
            <button><svg><use href="#t-box"/></svg>Box</button>
            <button><svg><use href="#t-rbox"/></svg>Rounded Box</button>
            <button><svg><use href="#t-circle"/></svg>Circle</button>
            <button><svg><use href="#t-line"/></svg>Line</button>
          </section>
          <section class="tool-group">
            <h3><span class="fold"></span>Common</h3>
            <button><svg><use href="#t-label"/></svg>Label</button>
            <button><svg><use href="#t-button"/></svg>Button</button>
            <button><svg><use href="#t-rbutton"/></svg>Rounded Button</button>
            <button><svg><use href="#t-cbutton"/></svg>Circle Button</button>
            <button><svg><use href="#t-image"/></svg>Image</button>
            <button><svg><use href="#t-check"/></svg>CheckBox</button>
            <button><svg><use href="#t-radio"/></svg>Radio Button</button>
            <button><svg><use href="#t-progress"/></svg>ProgressBar</button>
          </section>
        </div>
      </section>
      <section class="layers-panel">
        <header class="dock-title"><svg class="dock-icon"><use href="#i-layers"/></svg><h2>Layers</h2><button class="pin" aria-label="Pin"><svg><use href="#i-pin"/></svg></button><button class="close" aria-label="Close"><svg><use href="#i-x"/></svg></button></header>
        <div class="layers-toolbar">
          <button aria-label="Add layer"><svg><use href="#i-layer-add"/></svg></button>
          <button aria-label="Delete layer"><svg><use href="#i-trash"/></svg></button>
          <span class="separator"></span>
          <label><input type="checkbox">Show All Layers</label>
        </div>
        <div class="layers-body">
          <table class="layers">
            <thead><tr><th class="col-visible">Visible</th><th class="col-name">Layer name</th><th class="col-lock">Lock layer</th><th></th></tr></thead>
            <tbody>
              <tr class="selected"><td><svg class="eye"><use href="#i-eye"/></svg></td><td>Layer0</td><td><svg class="lock"><use href="#i-lock"/></svg></td><td></td></tr>
              <tr class="filler"><td></td><td></td><td></td><td></td></tr>
            </tbody>
          </table>
        </div>
      </section>
    </aside>
  </main>

  <footer class="status-bar">
    <span class="status-position">1: 1</span><span class="status-mode">Insert</span><span class="status-state">Modified</span><span class="status-blank"></span><span class="status-path">C:\...\Projects\VTFT_FT800\Easy FT90x v7_FT800\Calculator_Demo_Code\mikroC PRO for FT90X\Test_main.c</span><span class="status-rest"></span>
  </footer>

  <div class="taskbar">
    <button class="task-start" aria-label="Start"><svg><use href="#k-start"/></svg></button>
    <button class="task" aria-label="Internet Explorer"><svg><use href="#k-ie"/></svg></button>
    <button class="task" aria-label="Explorer"><svg><use href="#k-explorer"/></svg></button>
    <button class="task" aria-label="Media Player"><svg><use href="#k-wmp"/></svg></button>
    <button class="task" aria-label="Chrome"><svg><use href="#k-chrome"/></svg></button>
    <button class="task task-active" aria-label="mikroC"><svg><use href="#k-mikro"/></svg></button>
    <div class="tray">
      <button class="tray-more" aria-label="Show hidden icons"></button>
      <svg><use href="#y-flag"/></svg><svg><use href="#y-net"/></svg><svg><use href="#y-vol"/></svg>
      <div class="clock"><span>4:28 PM</span><span>7/4/2016</span></div>
    </div>
    <button class="show-desktop" aria-label="Show desktop"></button>
  </div>
</div>
</body>
</html>
```
FILE: styles.css
```css
* { box-sizing: border-box; }

:root {
  --ui: Roboto, "Noto Sans", sans-serif;
  --tahoma: "DejaVu Sans Condensed", "DejaVu Sans", sans-serif;
  --verdana: "DejaVu Sans", sans-serif;
}

body {
  margin: 0;
  font: 11px/16px var(--ui);
  color: #000;
  background: #f0f0e4;
}

button, input, select, fieldset, legend {
  margin: 0;
  padding: 0;
  border: 0;
  font: inherit;
  color: inherit;
}

button { background: none; }
h2, h3 { margin: 0; font-size: 11px; }
.sprite { position: absolute; width: 0; height: 0; }

.app {
  display: flex;
  flex-direction: column;
  height: 100vh;
  overflow: hidden;
}

/* Window caption and menu */
.caption-strip {
  display: flex;
  justify-content: flex-end;
  gap: 4px;
  height: 4px;
  flex: none;
  padding-right: 2px;
  background: #b2cce6;
}
.caption-button { width: 30px; height: 1px; background: #6c84a4; }
.caption-close { background: #4c0c1c; }

.menu-bar {
  display: flex;
  flex: none;
  align-items: center;
  gap: 14px;
  height: 20px;
  padding-left: 7px;
  font-size: 12px;
  background: linear-gradient(to right, #d9d8e4, #f1f0f6);
}
.menu-bar a { color: inherit; text-decoration: none; }
.menu-bar u { text-underline-offset: 2px; }

/* Toolbars */
.toolbar-row {
  display: flex;
  flex: none;
  gap: 3px;
  height: 29px;
  padding: 1px 4px 1px;
  border-top: 1px solid #fff;
  background: linear-gradient(to right, #e4e2d4, #f2f1e6);
}
.toolbar-row-second { height: 31px; }

.toolbar {
  display: flex;
  flex: none;
  align-items: center;
  height: 26px;
  padding: 0 4px 0 7px;
  border: 1px solid #a9c5ec;
  border-radius: 4px;
  background:
    linear-gradient(to bottom, #888880 50%, transparent 50%) 3px 5px / 2px 4px no-repeat,
    linear-gradient(to bottom, #888880 50%, transparent 50%) 3px 9px / 2px 4px no-repeat,
    linear-gradient(to bottom, #888880 50%, transparent 50%) 3px 13px / 2px 4px no-repeat,
    linear-gradient(to bottom, #888880 50%, transparent 50%) 3px 17px / 2px 4px no-repeat,
    linear-gradient(to bottom, #f7f6f0, #dddccd 50%, #c2c0a8);
}
.toolbar-snug { padding-right: 2px; }
.toolbar button {
  display: flex;
  align-items: center;
  justify-content: center;
  width: 23px;
  height: 22px;
}
.toolbar button.has-menu {
  justify-content: flex-start;
  width: 31px;
  padding-left: 4px;
}
.has-menu::after {
  content: "";
  margin-left: 3px;
  border: 3px solid transparent;
  border-top: 3px solid #000;
  border-bottom: 0;
}
.toolbar svg { width: 16px; height: 16px; }
.separator {
  width: 2px;
  height: 17px;
  margin: 0 3px 0 5px;
  background: linear-gradient(to right, #8c8c84 50%, #fff 50%);
}
.toolbar-screens button.wide, .toolbar-zoom button.wide { width: 28px; }
.toolbar-screens { padding: 0 0 0 8px; }
.toolbar-zoom { height: 28px; margin-left: 68px; padding: 0 3px 0 10px; }
.toolbar-edit { margin-left: 41px; }
.toolbar-edit button, .toolbar-align button { width: 26px; }

.picker {
  position: relative;
  display: block;
  background: #fff;
}
.picker select {
  width: 100%;
  height: 100%;
  appearance: none;
  background: none;
  outline: 0;
}
.picker::after {
  content: "";
  position: absolute;
  top: 0;
  right: 0;
  bottom: 0;
  width: 16px;
  pointer-events: none;
  background:
    conic-gradient(from 135deg at 50% 100%, transparent 0) 0 0 / 0 0 no-repeat,
    conic-gradient(from 315deg at 50% 100%, #000 90deg, transparent 0) 50% 50% / 6px 3px no-repeat;
}
.picker-scheme { width: 134px; height: 20px; margin-right: 1px; border: 1px solid #c8d4e4; }
.picker-scheme select { padding: 0 2px; font: 11px/16px var(--tahoma); }
.picker-zoom { width: 121px; height: 23px; margin-left: 2px; }
.picker-zoom select { padding: 0 4px 6px; font: 11px/16px var(--tahoma); }
.picker-zoom::after, .picker-wide::after {
  width: 12px;
  background:
    conic-gradient(from 315deg at 50% 100%, #000 90deg, transparent 0) 50% 50% / 5px 3px no-repeat,
    linear-gradient(#bcd6f6, #84a8e4);
}
.picker-zoom::after { right: 1px; }

.zoom-slider {
  width: 170px;
  height: 20px;
  margin: 3px 2px 0 0;
  appearance: none;
  background: linear-gradient(#7c7ca0 25%, #fff 25% 50%, #202030 50% 75%, #9c9cb4 75%) 0 10px / 100% 4px no-repeat;
}
.zoom-slider::-webkit-slider-thumb {
  appearance: none;
  width: 15px;
  height: 14px;
  background: linear-gradient(#8c8870, #8c8870) 50% 50% / 1px 5px no-repeat, #f8f6ee;
  border: 2px solid #9c9880;
  clip-path: polygon(0 0, 100% 0, 100% 60%, 50% 100%, 0 60%);
}

/* Docking layout */
.workspace {
  display: grid;
  grid-template-columns: 300px minmax(0, 1fr) 370px;
  grid-template-rows: minmax(0, 1fr);
  column-gap: 4px;
  flex: 1;
  min-height: 0;
  padding: 0 4px 0 2px;
  background: linear-gradient(to left, #f0efe2 4px, #efefee 4px);
}
.dock-title {
  display: flex;
  flex: none;
  align-items: center;
  height: 22px;
  padding: 0 5px;
  background: linear-gradient(#bccbda, #d8e5f2);
}
.dock-title h2 { flex: 1; padding-left: 3px; font-weight: 400; }
.dock-title-active { background: linear-gradient(#98b3d2, #b7d0ea); }
.dock-icon { width: 15px; height: 15px; }
.dock-title button { display: flex; align-items: center; justify-content: center; height: 14px; }
.dock-title .pin { width: 14px; margin-right: 6px; }
.dock-title .pin svg { width: 12px; height: 12px; }
.dock-title .close { width: 24px; border: 1px solid #8494b8; border-radius: 2px; background: #d2dcec; }
.dock-title .close svg { width: 12px; height: 10px; }
.dock-title .close-active { border-color: #8c2a2c; background: linear-gradient(#e4a09c, #c23c34); }

/* Inspector */
.inspector, .display, .right-dock { display: flex; flex-direction: column; min-height: 0; }
.inspector-body {
  display: flex;
  flex: 1;
  flex-direction: column;
  gap: 10px;
  min-height: 0;
  padding: 6px 5px 6px 6px;
  font: 11px/16px var(--verdana);
  background: linear-gradient(#fff, #fafaf4 50%, #f0efe4);
}
fieldset {
  display: flex;
  flex-direction: column;
  min-width: 0;
  padding: 2px 2px 3px;
  border: 1px solid #c0c0bc;
  border-radius: 4px;
}
legend { margin-left: 5px; padding: 0 2px; }
.screens-box { padding-bottom: 4px; }
.components-box { flex: 1; min-height: 0; }
.picker-wide { width: 278px; height: 20px; margin: 0 0 2px 3px; }
.picker-wide select { padding: 0 4px; }
.picker-wide::after { top: 2px; right: 2px; bottom: 2px; width: 16px; }
.tab-area {
  display: flex;
  flex: 1;
  flex-direction: column;
  min-height: 0;
  padding: 4px 1px 2px;
  background: linear-gradient(to right, #9e9c82, #c4c2aa);
}
.tab {
  align-self: flex-start;
  width: 64px;
  height: 24px;
  margin: 0 0 -2px 4px;
  z-index: 1;
  padding-top: 2px;
  border: 2px solid #000;
  border-right-width: 1px;
  border-left-width: 1px;
  border-bottom: 0;
  border-radius: 4px 4px 0 0;
  font: 11px/16px var(--tahoma);
  background: linear-gradient(#dcdacc, #fff 60%);
}
.tab-page {
  flex: 1;
  min-height: 0;
  padding: 3px;
  border: 2px solid #101010;
  border-radius: 4px;
  background: #fff;
}
.tab-page-empty { box-shadow: inset 0 0 0 1px #84848c; }
.property-frame { display: flex; border: 1px solid #808488; }
.properties { flex: 1; border-spacing: 0; table-layout: fixed; }
.properties th, .properties td {
  height: 17px;
  padding: 0 0 0 3px;
  border-bottom: 1px solid #deebfb;
  line-height: 16px;
  font-weight: 400;
  text-align: left;
}
.properties th { width: 117px; border-right: 1px solid #deebfb; }
.properties .gutter { width: 14px; padding: 0 3px; border: 0; background: #c2d8f0; }
.properties .category th, .properties .category td:last-child { background: #eeeeee; }
.properties label { display: flex; align-items: center; gap: 4px; }
input[type="checkbox"] {
  position: relative;
  width: 12px;
  height: 12px;
  appearance: none;
  border: 1px solid #a4b4d0;
  box-shadow: inset 0 0 0 2px #f2f2f2;
  background: linear-gradient(135deg, #c4c8cc, #fff);
}
input[type="checkbox"]:checked::after {
  content: "";
  position: absolute;
  left: 3px;
  top: 0;
  width: 4px;
  height: 8px;
  border: solid #40649c;
  border-width: 0 2px 2px 0;
  transform: rotate(35deg);
}
.fold {
  display: block;
  width: 8px;
  height: 8px;
  border: 1px solid #c8ccd8;
  background: linear-gradient(#3c5cb0, #3c5cb0) 50% 50% / 4px 1px no-repeat, #fff;
}
.gutter .fold { border-color: #607cac; }
.scrollbar {
  display: flex;
  flex-direction: column;
  align-items: center;
  width: 17px;
  padding: 8px 1px;
  background: #efefef;
}
.scroll-up, .scroll-down { border: 3px solid transparent; }
.scroll-up { border-top: 0; border-bottom-color: #444; }
.scroll-down { margin-top: auto; border-bottom: 0; border-top-color: #444; }
.scroll-thumb {
  width: 15px;
  height: 73px;
  margin-top: 7px;
  border: 1px solid #989898;
  border-radius: 2px;
  background:
    repeating-linear-gradient(#555 0 1px, transparent 1px 3px) 50% 50% / 7px 9px no-repeat,
    linear-gradient(to right, #f4f4f4, #c8c8cc);
}

/* Display */
.canvas {
  flex: 1;
  min-height: 0;
  margin-top: 1px;
  padding: 2px 1px;
  border: 1px solid #000;
  border-bottom-width: 2px;
  background: #a0a0a4;
  box-shadow: inset 0 0 0 1px #77777c;
}
.device-screen { width: 321px; height: 240px; border: 2px solid #080808; background: #5c5c5c; }
.screen-tabs {
  flex: none;
  height: 26px;
  background: linear-gradient(to right, #9e9c82, #c4c2aa);
}
.screen-tab { position: relative; width: 68px; height: 24px; margin-left: 3px; font: 11px/16px var(--tahoma); }
.screen-tab-shape { position: absolute; inset: -2px 0 0; width: 100%; height: 100%; }
.screen-tab span { position: relative; display: block; padding-bottom: 5px; }

/* Tools */
.tools-panel { display: flex; flex: none; flex-direction: column; height: 564px; }
.tools-body {
  display: flex;
  flex: 1;
  flex-direction: column;
  gap: 1px;
  padding: 2px 2px 2px 3px;
  border: 1px solid #909094;
  border-right-width: 2px;
  background: #f0f0ee;
}
.tool-group {
  display: flex;
  flex-direction: column;
  gap: 2px;
  padding: 0 2px 2px;
  border: 1px solid #707070;
  border-radius: 4px;
  background: linear-gradient(#808080, #8a8a8a 30%, #f0f0f0);
}
.tool-group h3 {
  display: flex;
  align-items: center;
  height: 14px;
  padding: 2px 0 0 2px;
  gap: 5px;
  font: 700 11px/14px var(--tahoma);
}
.tool-group button {
  display: flex;
  align-items: center;
  gap: 1px;
  height: 27px;
  padding-left: 6px;
  border: 1px solid #c8c8c8;
  background: #fff;
  font: 11px/16px var(--tahoma);
}
.tool-group svg { width: 16px; height: 16px; }

/* Layers */
.layers-panel { display: flex; flex: 1; flex-direction: column; min-height: 0; margin-top: 4px; }
.layers-toolbar {
  display: flex;
  flex: none;
  align-items: center;
  height: 28px;
  padding-left: 15px;
  background:
    repeating-linear-gradient(#888880 0 2px, transparent 2px 4px) 7px 8px / 2px 14px no-repeat,
    linear-gradient(to right, #e6e4d8, #f2f1e6);
}
.layers-toolbar button { width: 16px; height: 16px; margin-right: 10px; }
.layers-toolbar svg { display: block; width: 16px; height: 16px; }
.layers-toolbar label { display: flex; align-items: center; gap: 4px; }
.layers-toolbar input[type="checkbox"] { width: 11px; height: 11px; box-shadow: none; margin-left: 1px; }
.layers-toolbar .separator { margin-left: 0; }
.layers-body { display: grid; flex: 1; min-height: 0; border: 1px solid #84848a; border-right-width: 2px; background: #fff; }
.layers { width: 100%; height: 100%; border-spacing: 0; table-layout: fixed; }
.layers th, .layers td { padding: 0; border-right: 1px solid #ededed; text-align: left; vertical-align: middle; }
.layers th:last-child, .layers td:last-child { border-right: 0; }
.layers th { height: 18px; padding-left: 2px; border-bottom: 1px solid #d8d8d8; font: 11px/16px var(--tahoma); background: linear-gradient(#fff 50%, #f4f5f7); }
.layers .col-visible { width: 50px; padding: 0; text-align: center; }
.layers .col-name { width: 130px; }
.layers .col-lock { width: 60px; padding-left: 4px; }
.layers .selected td { height: 20px; padding-left: 2px; font: 700 11px/16px var(--tahoma); background: #3399ff; }
.layers .selected td:last-child { background: none; }
.layers svg { display: block; }
.eye { width: 16px; height: 10px; }
.lock { width: 16px; height: 16px; }
.layers .filler td { height: auto; }

/* Status bar */
.status-bar {
  display: flex;
  flex: none;
  height: 22px;
  padding-left: 2px;
  border-top: 2px solid #a0a0a0;
  font-size: 12px;
  line-height: 20px;
  background: linear-gradient(#f6f5ee, #dddccc 50%, #bcbaa2);
}
.status-bar span { padding-left: 3px; border-left: 1px solid #f8f8f2; box-shadow: -1px 0 #c0beaa; white-space: nowrap; }
.status-position { width: 99px; }
.status-mode { width: 50px; }
.status-state, .status-blank { width: 160px; }
.status-path { width: 729px; }
.status-rest { flex: 1; }

/* Taskbar */
.taskbar {
  display: flex;
  flex: none;
  align-items: center;
  height: 38px;
  border-top: 1px solid #44505e;
  background:
    linear-gradient(#c8d8ea, #c8d8ea) 0 0 / 100% 1px no-repeat,
    linear-gradient(to right, #8393ab 0, #8393ab 60px, #a7c0de 105px, #a7c0de calc(100% - 230px), #8293ab calc(100% - 190px));
}
.taskbar svg { display: block; margin: auto; }
.task-start { width: 59px; padding-right: 5px; }
.task-start svg { width: 36px; height: 36px; }
.task { width: 62px; height: 36px; }
.task svg { width: 32px; height: 30px; }
.task-active {
  width: 59px;
  border: 1px solid #4c5868;
  border-radius: 3px;
  box-shadow: inset 0 0 0 1px #f4f8fc;
  background: linear-gradient(135deg, #f0f4fa, #c4d4e8);
}
.task-active svg { width: 32px; height: 32px; }
.tray { display: flex; align-items: center; gap: 6px; height: 37px; margin-left: auto; color: #fff; }
.tray svg { width: 18px; height: 18px; margin: 0; }
.tray-more { width: 0; height: 0; margin-right: 5px; border: 4px solid transparent; border-top: 0; border-bottom: 4px solid #fff; }
.clock { display: flex; flex-direction: column; width: 72px; font-size: 12px; line-height: 17px; text-align: center; }
.show-desktop { width: 14px; height: 37px; border: 1px solid #52647e; background: linear-gradient(135deg, #b8c4d4, #8496ae 60%); }
```
